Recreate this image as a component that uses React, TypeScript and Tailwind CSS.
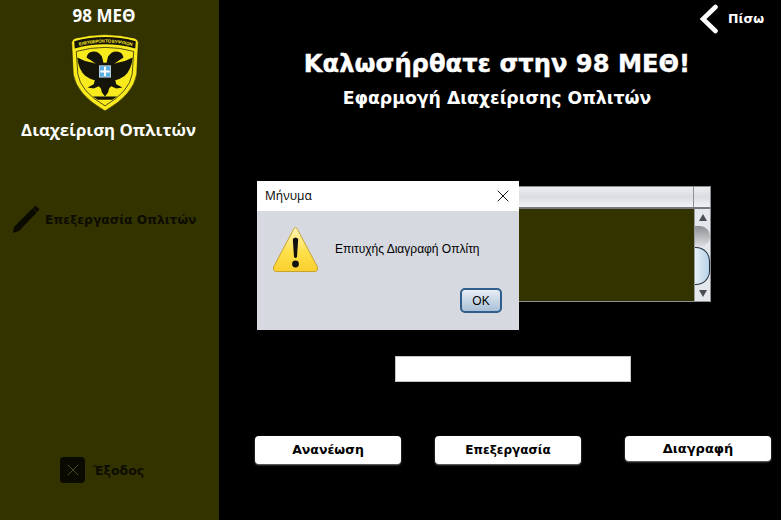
import { X } from "lucide-react";

const segoe = "font-['Open_Sans','Noto_Sans',sans-serif]";
const tahoma = "font-['DejaVu_Sans','Noto_Sans',sans-serif]";

function Shield() {
  return (
    <svg width="70" height="79" viewBox="0 0 68 77" className="block">
      <path d="M1.5 9 Q2 6 5 5 Q34 -2 63 5 Q66 6 66.5 9 L65 40 Q62 60 34 76 Q6 60 3 40 Z" fill="#f9ea1e" stroke="#1d1a06" strokeWidth="0.6" />
      <path d="M4 8 Q34 0 64 8 L63.5 15 Q34 7 4.5 15 Z" fill="#15140a" />
      <path id="shield-motto" d="M7 13 Q34 5.5 61 13" fill="none" />
      <text fontSize="4.4" fontWeight="700" fill="#f9ea1e" fontFamily="Liberation Sans, sans-serif">
        <textPath href="#shield-motto" startOffset="2" textLength="52">ΕΛΕΥΘΕΡΟΝ ΤΟ ΕΥΨΥΧΟΝ</textPath>
      </text>
      <path d="M6 18 Q34 10 62 18 L60.5 40 Q58 57 34 71 Q10 57 7.5 40 Z" fill="none" stroke="#15140a" strokeWidth="0.7" />
      {/* eagle */}
      <path
        d="M7 24 Q14 28 22 29 L25 30 Q19 26 16 24 Q17 18 23 18 Q28 18 31 23 L32.5 29 L35.5 29 L37 23 Q40 18 45 18 Q51 18 52 24 Q49 26 43 30 L46 29 Q54 28 61 24 Q60 36 53 42 Q49 45 44 46 L45 50 L51 53 L45 54 L40 52 L38 54 L37 58 L34 62 L31 58 L30 54 L28 52 L23 54 L17 53 L23 50 L24 46 Q19 45 15 42 Q8 36 7 24 Z"
        fill="#15140a"
      />
      <rect x="28.5" y="32" width="11" height="11" fill="#5aaee6" stroke="#e4eef5" strokeWidth="0.7" />
      <path d="M34 33 V42 M29.5 37.5 H38.5" stroke="#ffffff" strokeWidth="2" />
      <path d="M22 62 H46 L41 65 H27 Z" fill="#15140a" />
    </svg>
  );
}

function WarningIcon() {
  return (
    <svg width="47" height="47" viewBox="0 0 47 47" className="block">
      <defs>
        <linearGradient id="warn-fill" x1="0" y1="0" x2="0" y2="1">
          <stop offset="0" stopColor="#fff6b8" />
          <stop offset="0.55" stopColor="#ffe04a" />
          <stop offset="1" stopColor="#f9cf2e" />
        </linearGradient>
      </defs>
      <path d="M23.5 1.5 Q24.5 1.5 25.5 3.5 L45.5 41 Q46.5 45 43.5 45.5 L3.5 45.5 Q0.5 45 1.5 41 L21.5 3.5 Q22.5 1.5 23.5 1.5 Z" fill="url(#warn-fill)" stroke="#c8a430" strokeWidth="1" />
      <path d="M20.8 13 Q23.5 10 26.2 13 L25 31 Q23.5 33 22 31 Z" fill="#111" />
      <circle cx="23.5" cy="38" r="3.4" fill="#111" />
    </svg>
  );
}

function Scrollbar() {
  return (
    <div className="flex w-[16px] flex-col items-center bg-[#e4e7ec] border-l border-[#9a9c9f]">
      <div className="mt-[5px] h-0 w-0 border-x-[4px] border-b-[7px] border-x-transparent border-b-[#4a4d52]" />
      <div className="mt-[5px] h-[21px] w-full rounded-r-[10px] bg-gradient-to-b from-[#8d8f92] to-[#dfe1e5]" />
      <div className="h-[38px] w-full rounded-r-[14px] border border-l-0 border-[#233040] bg-gradient-to-r from-[#e6f0f8] to-[#b7d2e8]" />
      <div className="mt-auto mb-[4px] h-0 w-0 border-x-[4px] border-t-[7px] border-x-transparent border-t-[#4a4d52]" />
    </div>
  );
}

function ActionButton({ label, className }: { label: string; className: string }) {
  return (
    <button className={`${className} w-[146px] rounded-[4px] bg-white font-bold text-black shadow-[0_1px_2px_#777] ${tahoma}`}>
      {label}
    </button>
  );
}

export default function App() {
  return (
    <div className="relative flex h-[520px] w-[781px] overflow-hidden bg-black">
      {/* sidebar */}
      <aside className={`flex w-[219px] shrink-0 flex-col items-center bg-[#333300] ${segoe}`}>
        <div className="mt-[5px] -ml-[11px] h-[22px] text-[17px] leading-[22px] font-bold text-white">98 ΜΕΘ</div>
        <div className="mt-[6px] -ml-[10px]">
          <Shield />
        </div>
        <div className="mt-[6px] -ml-[2px] text-[16.8px] leading-[24px] font-bold whitespace-nowrap text-white">
          Διαχείριση Οπλιτών
        </div>
        <div className="mt-[62px] flex items-center self-start pl-[11px]">
          <svg width="30" height="30" viewBox="0 0 30 30">
            <path d="M24.5 1.5 L28.5 5.5 L8 27 L2 29 L3 23 Z" fill="#0a0a00" />
            <path d="M22 4.5 L26 8.5" stroke="#333300" strokeWidth="0.8" />
          </svg>
          <span className={`ml-[4px] mt-[3px] text-[12.3px] font-bold whitespace-nowrap text-[#0c0c00] ${tahoma}`}>
            Επεξεργασία Οπλιτών
          </span>
        </div>
        <div className="mt-auto mb-[37px] flex items-center self-start pl-[60px]">
          <div className="flex h-[26px] w-[25px] items-center justify-center rounded-[4px] bg-[#0a0a00]">
            <X size={20} strokeWidth={1} color="#55552a" />
          </div>
          <span className={`ml-[8px] mt-[2px] text-[12.5px] font-bold text-[#0c0c00] ${tahoma}`}>Έξοδος</span>
        </div>
      </aside>

      {/* main */}
      <main className={`flex flex-1 flex-col text-white ${tahoma}`}>
        <div className="flex h-[38px] items-center justify-end pr-[17px]">
          <svg width="20" height="30" viewBox="0 0 20 30" className="mr-[9px]">
            <path d="M16.5 3 L4 15 L16.5 27" fill="none" stroke="#ffffff" strokeWidth="4.6" strokeLinecap="round" />
          </svg>
          <span className="text-[12.5px] font-bold">Πίσω</span>
        </div>
        <h1 className="mt-[10px] -ml-[6px] text-center text-[24.2px] leading-[32px] font-bold whitespace-nowrap [-webkit-text-stroke:0.4px_white]">
          Καλωσήρθατε στην 98 ΜΕΘ!
        </h1>
        <h2 className="mt-[7px] -ml-[6px] text-center text-[17.3px] leading-[22px] font-bold whitespace-nowrap">
          Εφαρμογή Διαχείρισης Οπλιτών
        </h2>

        <div className="mt-[77px] ml-[71px] flex h-[116px] w-[421px] flex-col border border-[#8c8e92] bg-[#333300]">
          <div className="flex h-[22px] shrink-0 border-b-2 border-[#77797c] bg-gradient-to-b from-[#eceef1] via-[#d9dce1] to-[#f0f2f5]">
            <div className="flex-1 border-r border-[#8c8e92]" />
            <div className="w-[16px]" />
          </div>
          <div className="flex flex-1 justify-end">
            <Scrollbar />
          </div>
        </div>

        <input
          readOnly
          className="mt-[54px] ml-[176px] h-[26px] w-[236px] border border-[#c4c4c4] bg-white"
        />

        <div className="mt-[54px] ml-[36px] flex items-start">
          <ActionButton label="Ανανέωση" className="h-[28px] text-[12.5px]" />
          <div className="ml-[34px]">
            <ActionButton label="Επεξεργασία" className="h-[28px] text-[12px]" />
          </div>
          <div className="ml-[44px]">
            <ActionButton label="Διαγραφή" className="h-[25px] text-[13px]" />
          </div>
        </div>
      </main>

      {/* message dialog */}
      <div className="absolute top-[181px] left-[257px] flex h-[149px] w-[262px] flex-col bg-[#d6d9e0] font-['Liberation_Sans',sans-serif] text-black">
        <div className="flex h-[30px] shrink-0 items-center justify-between bg-white pr-[6px] pl-[8px]">
          <span className={`text-[12px] ${segoe}`}>Μήνυμα</span>
          <X size={20} strokeWidth={1.1} />
        </div>
        <div className="flex items-start pt-[15px] pl-[15px]">
          <WarningIcon />
          <span className="mt-[15px] ml-[16px] text-[12px] leading-[16px] whitespace-nowrap">Επιτυχής Διαγραφή Οπλίτη</span>
        </div>
        <div className="mt-auto mb-[17px] flex justify-end pr-[17px]">
          <button className="h-[25px] w-[42px] rounded-[5px] border-2 border-[#2f5d8c] bg-gradient-to-b from-[#e8eef5] to-[#a9c0d6] text-[12px] leading-none">
            OK
          </button>
        </div>
      </div>
    </div>
  );
}
